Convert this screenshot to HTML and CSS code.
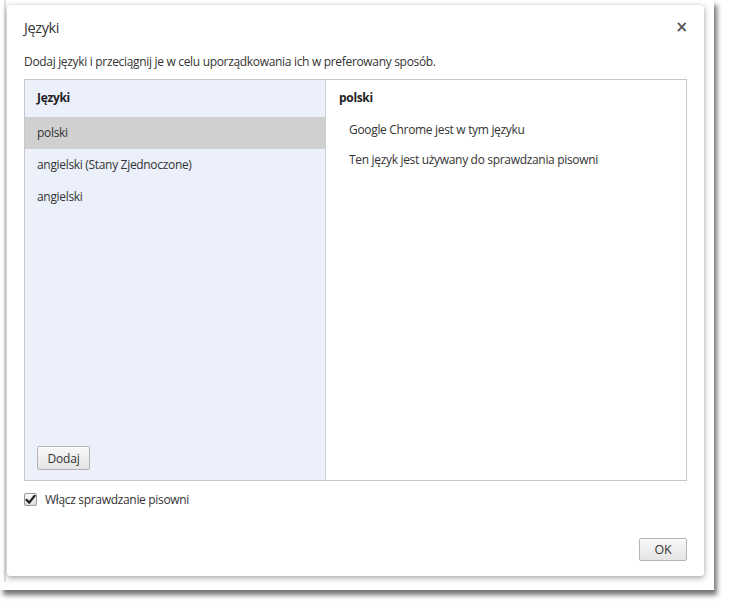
FILE: index.html
```html
<!DOCTYPE html>
<html lang="pl">
<head>
<meta charset="utf-8">
<title>Języki</title>
<link rel="stylesheet" href="styles.css">
</head>
<body>
<div class="screen">
  <div class="page-edge"></div>
  <div class="dialog">
    <div class="dialog-head">
      <h1 class="dialog-title">Języki</h1>
      <span class="close">×</span>
    </div>
    <p class="intro">Dodaj języki i przeciągnij je w celu uporządkowania ich w preferowany sposób.</p>
    <div class="panel">
      <div class="lang-list">
        <div class="list-head">Języki</div>
        <div class="lang-row selected">polski</div>
        <div class="lang-row">angielski (Stany Zjednoczone)</div>
        <div class="lang-row">angielski</div>
        <div class="list-foot"><button class="btn btn-add">Dodaj</button></div>
      </div>
      <div class="lang-detail">
        <div class="detail-head">polski</div>
        <div class="detail-item">Google Chrome jest w tym języku</div>
        <div class="detail-item">Ten język jest używany do sprawdzania pisowni</div>
      </div>
    </div>
    <label class="check-row">
      <span class="check-box"><svg width="11" height="11" viewBox="0 0 11 11"><path d="M1.5 5.8 L4.3 8.6 L9.6 1.8" fill="none" stroke="#222" stroke-width="2.2" stroke-linecap="round" stroke-linejoin="round"/></svg></span>
      <span class="check-label">Włącz sprawdzanie pisowni</span>
    </label>
    <div class="dialog-foot"><button class="btn btn-ok">OK</button></div>
  </div>
</div>
</body>
</html>
```

FILE: styles.css
```css
* { box-sizing: border-box; }
html, body { margin: 0; padding: 0; background: #ffffff; }
body {
  font-family: "Open Sans", "Noto Sans", "Liberation Sans", sans-serif;
  font-size: 12px;
  letter-spacing: -0.32px;
  color: #333;
  width: 730px;
  height: 605px;
  overflow: hidden;
}
.screen {
  position: relative;
  width: 714px;
  height: 590px;
  background: #fff;
  padding: 5px 10px 14px 7px;
  box-shadow: 3px 5px 5px rgba(0,0,0,0.55);
  display: flex;
}
.page-edge {
  position: absolute;
  left: 4px;
  top: 0;
  bottom: 8px;
  width: 2px;
  background: #e2e2e2;
}
.dialog {
  position: relative;
  flex: 1;
  background: #fff;
  border-radius: 3px;
  box-shadow: 0 2px 6px rgba(0,0,0,0.35), 0 0 1px rgba(0,0,0,0.2);
  padding: 0 17px 15px 17px;
  display: flex;
  flex-direction: column;
}
.dialog-head {
  height: 44px;
  display: flex;
  align-items: center;
  justify-content: space-between;
}
.dialog-title {
  margin: 0;
  font-size: 14.5px;
  font-weight: normal;
  letter-spacing: -0.4px;
  color: #333;
}
.close {
  font-family: "DejaVu Sans", sans-serif;
  font-size: 15px;
  font-weight: bold;
  color: #555;
  margin-right: -1px;
  line-height: 1;
  letter-spacing: 0;
}
.intro {
  margin: 0;
  height: 30px;
  line-height: 26px;
  color: #333;
}
.panel {
  height: 402px;
  border: 1px solid #c8c8c8;
  display: flex;
}
.lang-list {
  width: 301px;
  background: #ebf0fa;
  border-right: 1px solid #cdd2da;
  display: flex;
  flex-direction: column;
}
.list-head {
  height: 37px;
  padding: 0 12px;
  line-height: 36px;
  font-weight: bold;
  color: #222;
}
.lang-row {
  height: 32px;
  line-height: 31px;
  padding: 0 12px;
  color: #333;
}
.lang-row.selected { background: #d0d0d0; }
.list-foot {
  margin-top: auto;
  padding: 0 12px 10px;
}
.lang-detail {
  flex: 1;
  background: #fff;
}
.detail-head {
  height: 35px;
  padding: 0 13px;
  line-height: 36px;
  font-weight: bold;
  color: #222;
}
.detail-item {
  height: 30px;
  line-height: 30px;
  padding: 0 23px;
  color: #333;
}
.btn {
  font-family: inherit;
  font-size: 12px;
  letter-spacing: -0.2px;
  color: #333;
  border: 1px solid #b4b4b4;
  border-radius: 2px;
  background: linear-gradient(#f8f8f8, #e4e4e4);
  box-shadow: inset 0 1px 0 #fff;
  padding: 0;
}
.btn-add { width: 53px; height: 24px; }
.btn-ok { width: 48px; height: 23px; font-size: 12.5px; }
.check-row {
  display: flex;
  align-items: center;
  height: 36px;
}
.check-box {
  width: 13px;
  height: 13px;
  border: 1px solid #9a9a9a;
  border-radius: 2px;
  background: linear-gradient(#fdfdfd, #dcdcdc);
  display: flex;
  align-items: center;
  justify-content: center;
  margin-right: 8px;
}
.check-box svg { display: block; }
.dialog-foot {
  margin-top: auto;
  display: flex;
  justify-content: flex-end;
}
```
